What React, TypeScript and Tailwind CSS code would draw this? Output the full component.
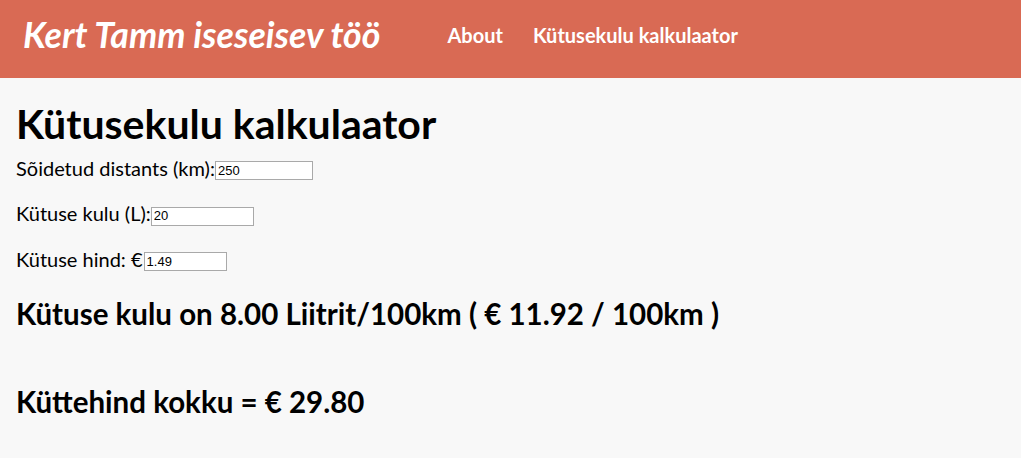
import React from "react";

export default function App() {
  const inputCls =
    "h-[19px] border border-[#a9a9a9] bg-white px-[2px] font-['Liberation_Sans',sans-serif] text-[13px] align-middle";
  return (
    <div className="min-h-[458px] bg-[#f8f8f8] font-['Lato',sans-serif] text-black">
      <header className="flex h-[78px] items-center bg-[#d96a54] px-[23px] pb-[9px] text-white">
        <div className="text-[35.7px] font-bold italic leading-none">Kert Tamm iseseisev töö</div>
        <nav className="ml-[67px] flex gap-[30px] text-[20px] font-bold">
          <span>About</span>
          <span>Kütusekulu kalkulaator</span>
        </nav>
      </header>
      <main className="px-4">
        <h1 className="mt-[22px] text-[41px] font-bold leading-[48px]">Kütusekulu kalkulaator</h1>
        <p className="mt-[8px] text-[20px] leading-[24px]">
          Sõidetud distants (km):<input className={inputCls + " w-[98px]"} defaultValue="250" />
        </p>
        <p className="mt-[21px] text-[20px] leading-[24px]">
          Kütuse kulu (L):<input className={inputCls + " w-[103px]"} defaultValue="20" />
        </p>
        <p className="mt-[21px] text-[20px] leading-[24px]">
          Kütuse hind: €<input className={inputCls + " ml-[1px] w-[83px]"} defaultValue="1.49" />
        </p>
        <h2 className="mt-[25px] text-[29.5px] font-bold leading-[36px]">Kütuse kulu on 8.00 Liitrit/100km ( € 11.92 / 100km )</h2>
        <h2 className="mt-[52px] text-[29.5px] font-bold leading-[36px]">Küttehind kokku = € 29.80</h2>
      </main>
    </div>
  );
}
